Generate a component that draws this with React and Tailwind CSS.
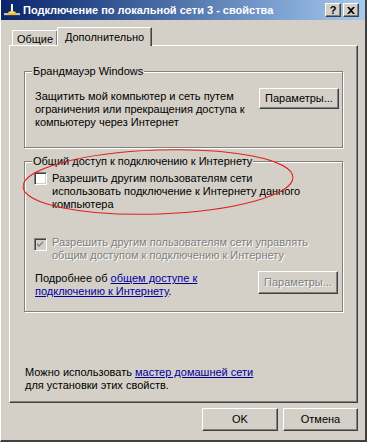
import React from 'react'

// classic 3D raised edge used by buttons
const raised =
  'border border-t-white border-l-white border-r-[#404040] border-b-[#404040] shadow-[inset_-1px_-1px_0_#808080]'

function Button({ children, disabled, className = '' }) {
  return (
    <div
      className={`${raised} bg-[#d4d0c8] flex items-center justify-center ${className} ${
        disabled ? 'text-[#808080] [text-shadow:1px_1px_0_white]' : 'text-black'
      }`}
    >
      {children}
    </div>
  )
}

function Group({ label, children, className = '' }) {
  return (
    <fieldset
      className={`border border-[#808080] shadow-[1px_1px_0_white,inset_1px_1px_0_white] ${className}`}
    >
      <legend className="ml-[7px] px-[1px] leading-[13px] bg-[#d4d0c8]">{label}</legend>
      {children}
    </fieldset>
  )
}

function CheckBox({ checked, disabled }) {
  return (
    <div
      className={`w-[13px] h-[13px] shrink-0 border border-t-[#808080] border-l-[#808080] border-r-white border-b-white shadow-[inset_1px_1px_0_#404040,inset_-1px_-1px_0_#d4d0c8] ${
        disabled ? 'bg-[#d4d0c8]' : 'bg-white'
      } flex items-center justify-center`}
    >
      {checked && (
        <svg width="7" height="7" viewBox="0 0 7 7">
          <path d="M0 2 L2 4 L6 0 L6 2 L2 6 L0 4 Z" fill={disabled ? '#808080' : '#000'} />
        </svg>
      )}
    </div>
  )
}

function NetIcon() {
  return (
    <svg width="16" height="16" viewBox="0 0 16 16" className="shrink-0">
      <rect x="7" y="2" width="2" height="8" fill="#e8e8e8" />
      <rect x="7" y="2" width="1" height="8" fill="#ffffff" />
      <rect x="0" y="11" width="16" height="2" fill="#c0c0c0" />
      <rect x="0" y="13" width="16" height="1" fill="#404040" />
      <ellipse cx="8" cy="11" rx="4" ry="2" fill="#e8c030" />
      <ellipse cx="8" cy="10.5" rx="2.5" ry="1" fill="#f8e080" />
    </svg>
  )
}

export default function App() {
  return (
    <div className="relative w-[367px] h-[442px] overflow-hidden bg-[#d4d0c8] text-[11px] leading-[13px] text-black font-['Liberation_Sans',Arial,sans-serif] border-l border-l-white border-r-2 border-r-[#404040] border-b-2 border-b-[#404040]">
      {/* Title bar */}
      <div className="h-[20px] flex items-center pl-[3px] pr-[6px] bg-gradient-to-r from-[#0a246a] to-[#a6caf0]">
        <NetIcon />
        <div className="ml-[3px] text-white font-bold text-[11px] whitespace-nowrap">
          Подключение по локальной сети 3 - свойства
        </div>
        <div className="ml-auto flex gap-[2px]">
          <Button className="w-[16px] h-[14px] font-bold text-[11px] leading-none">?</Button>
          <Button className="w-[16px] h-[14px]">
            <svg width="8" height="7" viewBox="0 0 8 7">
              <path d="M0 0 L2 0 L4 2 L6 0 L8 0 L5 3.5 L8 7 L6 7 L4 5 L2 7 L0 7 L3 3.5 Z" fill="#000" />
            </svg>
          </Button>
        </div>
      </div>

      <div className="pl-[8px] pr-[6px]">
        {/* Tabs */}
        <div className="mt-[7px] h-[18px] flex items-end pl-[3px]">
          <div className="h-[15px] w-[46px] border border-b-0 border-t-white border-l-white border-r-[#404040] shadow-[inset_-1px_0_0_#808080] flex items-center justify-center pt-[2px]">
            Общие
          </div>
          <div className="relative z-10 -mb-px h-[19px] w-[95px] -ml-[1px] bg-[#d4d0c8] border border-b-0 border-t-white border-l-white border-r-[#404040] shadow-[inset_-1px_0_0_#808080] flex items-start justify-center pt-[3px]">
            Дополнительно
          </div>
        </div>

        {/* Tab panel */}
        <div className="h-[358px] w-[349px] flex flex-col border border-t-white border-l-white border-r-[#404040] border-b-[#404040] shadow-[inset_-1px_-1px_0_#808080] px-[14px]">
          <Group label="Брандмауэр Windows" className="mt-[19px] pb-[18px]">
            <div className="flex items-start pt-[12px] pl-[10px] pr-[3px]">
              <div>
                Защитить мой компьютер и сеть путем
                <br />
                ограничения или прекращения доступа к
                <br />
                компьютеру через Интернет
              </div>
              <Button className="ml-auto -mt-[2px] w-[80px] h-[21px]">Параметры...</Button>
            </div>
          </Group>

          <Group label="Общий доступ к подключению к Интернету" className="mt-[7px] pb-[13px]">
            <div className="pl-[9px] pr-[4px] pt-[4px]">
              <div className="flex gap-[5px]">
                <CheckBox />
                <div>
                  Разрешить другим пользователям сети
                  <br />
                  использовать подключение к Интернету данного
                  <br />
                  компьютера
                </div>
              </div>
              <div className="flex gap-[5px] mt-[25px] text-[#808080] [text-shadow:1px_1px_0_white]">
                <div className="pt-[2px]">
                  <CheckBox checked disabled />
                </div>
                <div>
                  Разрешить другим пользователям сети управлять
                  <br />
                  общим доступом к подключению к Интернету
                </div>
              </div>
              <div className="flex items-start mt-[10px] pl-[1px]">
                <div>
                  Подробнее об{' '}
                  <span className="text-[#0000a0] underline">общем доступе к</span>
                  <br />
                  <span className="text-[#0000a0] underline">подключению к Интернету</span>.
                </div>
                <Button disabled className="ml-auto -mt-[1px] w-[80px] h-[23px]">
                  Параметры...
                </Button>
              </div>
            </div>
          </Group>

          <div className="mt-auto mb-[10px] pl-[1px]">
            Можно использовать{' '}
            <span className="text-[#0000a0] underline">мастер домашней сети</span>
            <br />
            для установки этих свойств.
          </div>
        </div>

        {/* Dialog buttons */}
        <div className="mt-[5px] flex justify-end gap-[5px] w-[349px]">
          <Button className="w-[76px] h-[23px]">OK</Button>
          <Button className="w-[75px] h-[23px]">Отмена</Button>
        </div>
      </div>

      {/* hand-drawn red ellipse */}
      <svg className="absolute left-0 top-0 pointer-events-none" width="367" height="442">
        <ellipse
          cx="157"
          cy="182"
          rx="135"
          ry="32"
          transform="rotate(-2 157 182)"
          fill="none"
          stroke="#e02020"
          strokeWidth="1"
        />
      </svg>
    </div>
  )
}
